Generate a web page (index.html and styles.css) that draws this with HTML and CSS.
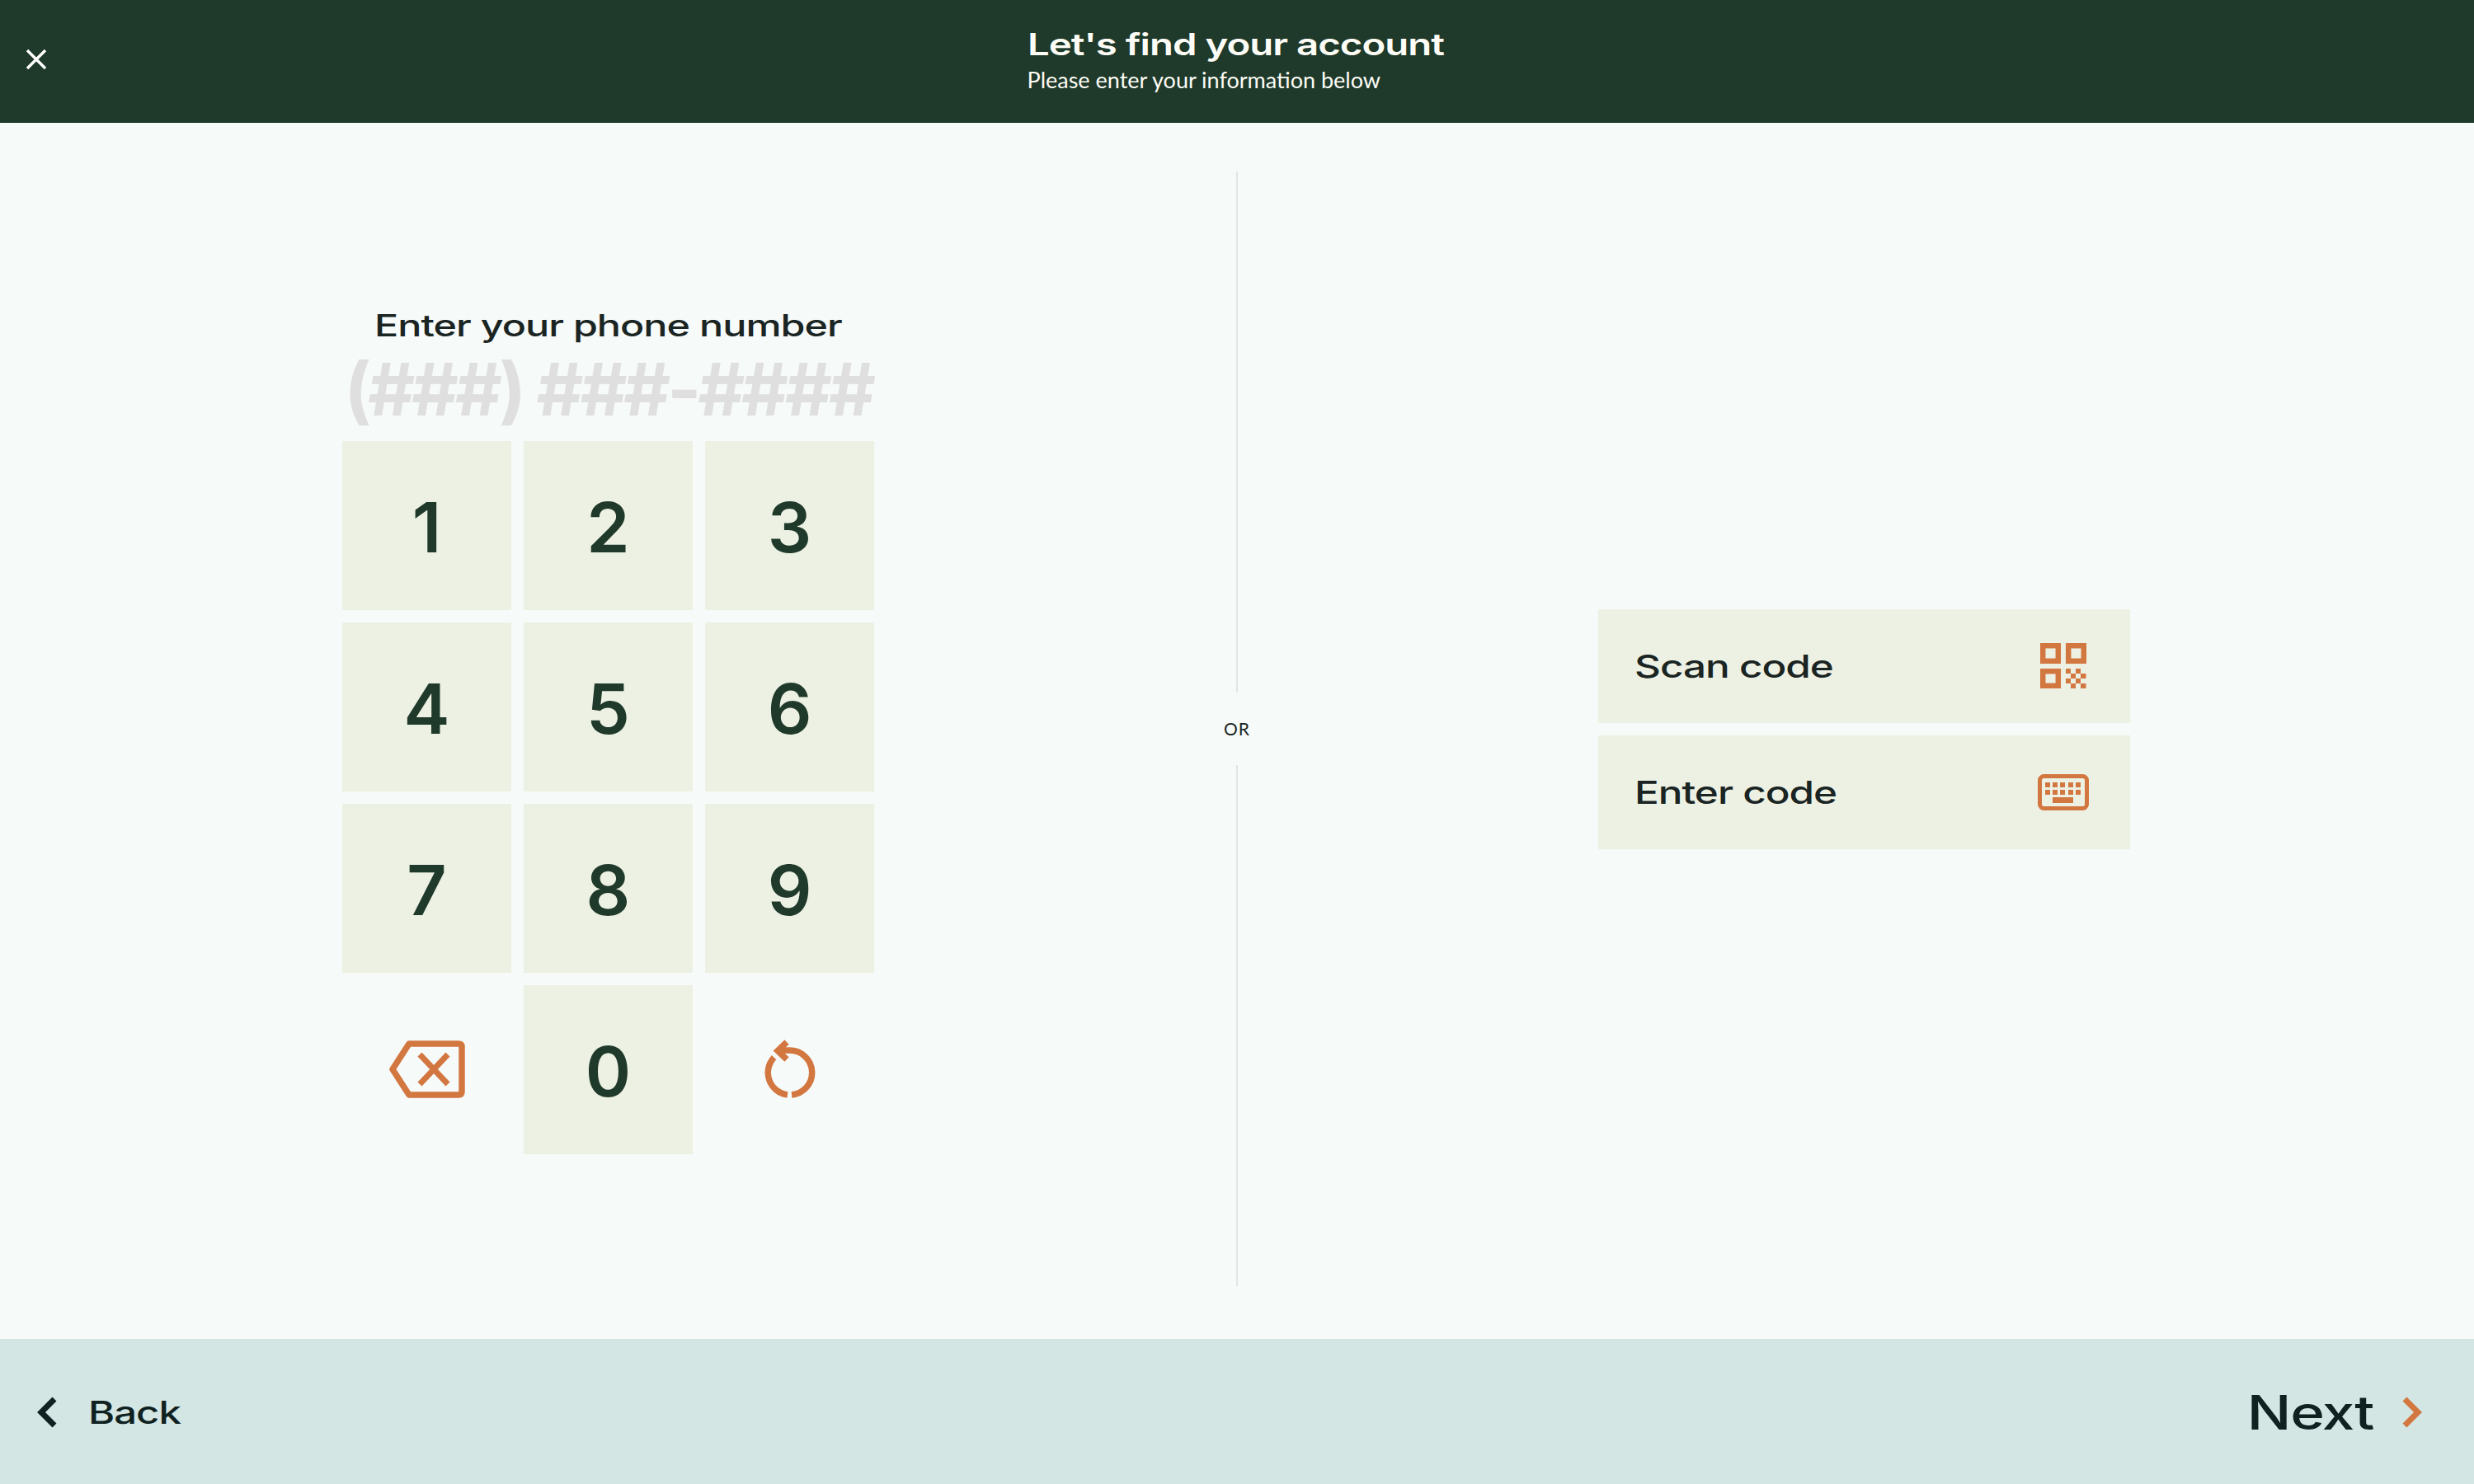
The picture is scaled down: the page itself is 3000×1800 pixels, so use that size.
FILE: index.html
```html
<!DOCTYPE html>
<html lang="en">
<head>
<meta charset="utf-8">
<title>Let's find your account</title>
<link rel="stylesheet" href="styles.css">
</head>
<body>
<div class="app">
  <header class="topbar">
    <button class="close" aria-label="Close">
      <svg width="26" height="26" viewBox="0 0 26 26"><path d="M2 2 24 24M24 2 2 24" fill="none" stroke="#fff" stroke-width="3.4"/></svg>
    </button>
    <div class="heading">
      <h1 class="wide title">Let's find your account</h1>
      <p class="subtitle">Please enter your information below</p>
    </div>
  </header>
  <main class="content">
    <section class="pane pane-left">
      <div class="phone">
        <h2 class="wide phone-title">Enter your phone number</h2>
        <div class="mask">(###) ###-####</div>
        <div class="keypad">
          <button class="key">1</button>
          <button class="key">2</button>
          <button class="key">3</button>
          <button class="key">4</button>
          <button class="key">5</button>
          <button class="key">6</button>
          <button class="key">7</button>
          <button class="key">8</button>
          <button class="key">9</button>
          <button class="key key-plain" aria-label="Delete">
            <svg width="92" height="70" viewBox="0 0 92 70"><path d="M24 4H84Q88 4 88 8V62Q88 66 84 66H24L4 35Z" fill="none" stroke="#d37741" stroke-width="7.5" stroke-linejoin="round"/><path d="M37 17 71 53M71 17 37 53" fill="none" stroke="#d37741" stroke-width="7"/></svg>
          </button>
          <button class="key">0</button>
          <button class="key key-plain" aria-label="Reset">
            <svg width="62" height="72" viewBox="0 0 62 72"><path d="M11.600 21.600A27 27 0 0 0 28 66.900M33 66.900A27 27 0 0 0 30.500 13H18" fill="none" stroke="#d37741" stroke-width="7.5"/><path d="M27 3 16 13.500 27 24" fill="none" stroke="#d37741" stroke-width="7.5"/></svg>
          </button>
        </div>
      </div>
    </section>
    <div class="divider">
      <span class="rule"></span>
      <span class="or">OR</span>
      <span class="rule"></span>
    </div>
    <section class="pane pane-right">
      <div class="actions">
        <button class="action">
          <span class="wide action-label">Scan code</span>
          <svg class="qr" width="56" height="55" viewBox="0 0 56 55"><g fill="none" stroke="#d37741" stroke-width="6.5"><rect x="3.200" y="3.200" width="18.600" height="18.600"/><rect x="34.200" y="3.200" width="18.600" height="18.600"/><rect x="3.200" y="34.200" width="18.600" height="17.600"/></g><g fill="#d37741"><rect x="31" y="31" width="6" height="6"/><rect x="43" y="31" width="6" height="6"/><rect x="37" y="37" width="6" height="6"/><rect x="49" y="37" width="6.500" height="6"/><rect x="31" y="43" width="6" height="6"/><rect x="43" y="43" width="6" height="6"/><rect x="37" y="49" width="6" height="6"/><rect x="49" y="49" width="6.500" height="6"/></g></svg>
        </button>
        <button class="action">
          <span class="wide action-label">Enter code</span>
          <svg width="62" height="44" viewBox="0 0 62 44"><rect x="2.500" y="2.500" width="57" height="39" rx="5" fill="none" stroke="#d37741" stroke-width="5"/><g fill="#d37741"><rect x="9" y="10" width="6" height="6"/><rect x="18" y="10" width="6" height="6"/><rect x="27" y="10" width="6" height="6"/><rect x="37" y="10" width="6" height="6"/><rect x="46" y="10" width="6" height="6"/><rect x="9" y="19" width="6" height="6"/><rect x="18" y="19" width="6" height="6"/><rect x="27" y="19" width="6" height="6"/><rect x="37" y="19" width="6" height="6"/><rect x="46" y="19" width="6" height="6"/><rect x="18" y="28" width="25" height="7"/></g></svg>
        </button>
      </div>
    </section>
  </main>
  <footer class="bottombar">
    <button class="nav nav-back">
      <svg width="24" height="38" viewBox="0 0 24 38"><path d="M21 3 5 19 21 35" fill="none" stroke="#0f2120" stroke-width="7"/></svg>
      <span class="wide back-label">Back</span>
    </button>
    <button class="nav nav-next">
      <span class="wide next-label">Next</span>
      <svg width="24" height="38" viewBox="0 0 24 38"><path d="M3 3 19 19 3 35" fill="none" stroke="#d37741" stroke-width="7"/></svg>
    </button>
  </footer>
</div>
</body>
</html>
```
FILE: styles.css
```css
* { box-sizing: border-box; }
html, body { margin: 0; padding: 0; }
body { background: #f6faf8; font-family: "Inter", "Liberation Sans", sans-serif; color: #0f2120; }
button { border: 0; background: none; padding: 0; margin: 0; font: inherit; color: inherit; }
h1, h2, p { margin: 0; }

.app { width: 3000px; height: 1800px; display: flex; flex-direction: column; overflow: hidden; }

.topbar { height: 149px; flex: none; background: #1f3a2a; display: grid; grid-template-columns: 1fr auto 1fr; align-items: center; color: #fdfcf6; }
.close { justify-self: start; margin-left: 31px; margin-top: -5px; width: 26px; height: 26px; display: flex; }
.heading { grid-column: 2; width: 509px; padding-right: 4px; margin-bottom: 4px; }

.wide { display: inline-block; transform-origin: left center; white-space: nowrap; letter-spacing: -0.02em; }
.title { display: block; font-size: 37px; line-height: 42px; font-weight: 600; transform: scaleX(1.278); }
.subtitle { font-family: "Lato", sans-serif; font-size: 27px; line-height: 32px; margin-top: 6px; font-weight: 400; white-space: nowrap; }

.content { flex: 1; display: flex; padding: 59px 0 64px; }
.pane { display: flex; align-items: center; justify-content: center; }
.pane-left { flex: 0 0 1499px; padding-right: 24px; }
.pane-right { flex: 1; padding-left: 19px; }

.phone { width: 645px; display: flex; flex-direction: column; align-items: center; }
.phone-title { display: block; margin-top: 6px; font-size: 37px; line-height: 40px; font-weight: 500; color: #1a2422; transform-origin: center; transform: scaleX(1.31); }
.mask { font-size: 88px; line-height: 104px; font-weight: 700; letter-spacing: -4.2px; color: #e0dfe0; white-space: nowrap; margin-top: 5px; margin-bottom: 11px; }

.keypad { display: grid; grid-template-columns: repeat(3, 205px); grid-auto-rows: 205px; gap: 15px; }
.key { background: #edf1e3; color: #1f3a2a; font-size: 84px; font-weight: 600; display: flex; align-items: center; justify-content: center; padding-top: 4px; }
.key-plain { background: none; padding-top: 0; }

.divider { width: 2px; flex: none; display: flex; flex-direction: column; align-items: center; }
.rule { flex: 1; width: 2px; background: #e3e6e5; }
.or { height: 88px; display: flex; align-items: center; font-family: "Lato", sans-serif; font-size: 21px; letter-spacing: 1px; color: #1a2422; padding-bottom: 2px; }

.actions { width: 645px; display: flex; flex-direction: column; gap: 15px; }
.action { height: 138px; background: #edf1e3; display: flex; align-items: center; justify-content: space-between; padding: 0 50px 0 44px; }
.qr { margin-right: 3px; }
.action-label { font-size: 38px; font-weight: 500; color: #1a2422; transform: scaleX(1.3); }

.bottombar { height: 176px; flex: none; background: #d3e6e4; display: flex; align-items: center; justify-content: space-between; padding: 2px 63px 0 45px; }
.nav { display: flex; align-items: center; }
.nav-back { gap: 38px; }
.nav-next { gap: 35px; }
.back-label { font-size: 38px; font-weight: 500; transform: scaleX(1.29); }
.next-label { font-size: 57px; font-weight: 500; transform: scaleX(1.245); transform-origin: right center; }
```
